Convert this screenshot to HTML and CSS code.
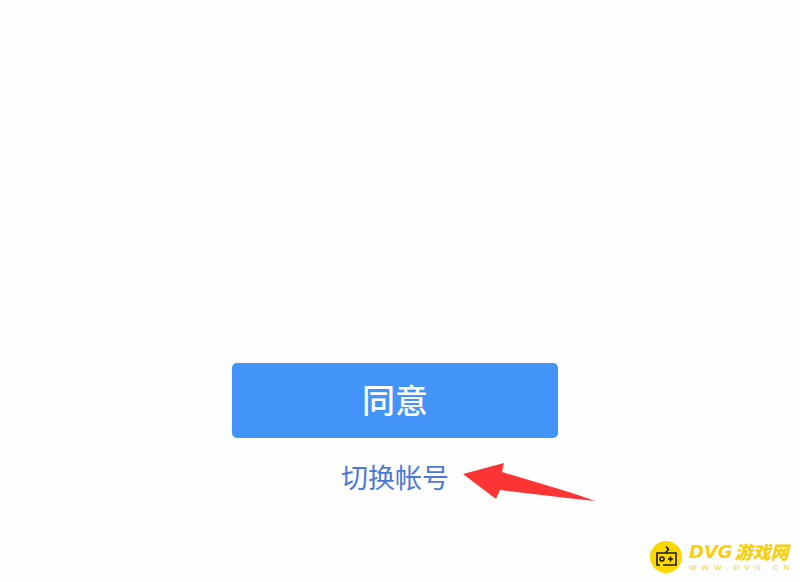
FILE: index.html
```html
<!DOCTYPE html>
<html lang="zh-CN">
  <head>
    <meta charset="UTF-8" />
    <meta name="viewport" content="width=device-width, initial-scale=1.0" />
    <title>切换帐号</title>
    <link rel="stylesheet" href="styles.css">
  </head>
  <body>
    <main class="login">
      <button class="agree-btn" type="button">同意</button>
      <div class="switch-wrapper">
        <a class="switch-link" href="#">切换帐号</a>
        <svg class="arrow" viewBox="0 0 134 38" aria-hidden="true">
          <path d="M0 11L41 0L39 9L96 26Q122 34 132 38L104 35L37 27L33 36Z" fill="#fc3434" />
        </svg>
      </div>
    </main>

    <footer class="brand">
      <svg class="brand-logo" viewBox="0 0 32 32" aria-hidden="true">
        <circle cx="16" cy="16" r="16" fill="#fbd800" />
        <g fill="none" stroke="#1c1a08" stroke-width="1.6">
          <path d="M10 24H7V12H26V24H13" />
          <path d="M16.500 12V10.500L18.500 8.500L16 5.500" />
          <circle cx="12" cy="18" r="2" />
          <path d="M20.500 15.500V20.500M18 18H23" />
        </g>
      </svg>
      <div class="brand-text">
        <div class="brand-name"><span class="brand-latin">DVG</span>游戏网</div>
        <div class="brand-url">WWW.DVG.CN</div>
      </div>
    </footer>
  </body>
</html>
```

FILE: styles.css
```css
body {
  margin: 0;
  min-height: 100vh;
  display: flex;
  flex-direction: column;
  background: #fefefe;
  font-family: "Noto Sans CJK SC", sans-serif;
}

.login {
  flex: 1;
  display: flex;
  flex-direction: column;
  justify-content: flex-end;
  align-items: center;
  gap: 20px;
  padding: 0 10px 44px 0;
}

.agree-btn {
  width: 326px;
  max-width: 90%;
  height: 75px;
  padding: 0 0 4px;
  border: none;
  border-radius: 5px;
  background: #4294f8;
  color: #fff;
  font-family: inherit;
  font-size: 33px;
  font-weight: 500;
  line-height: 70px;
  cursor: pointer;
}

.switch-wrapper {
  position: relative;
}

.switch-link {
  display: block;
  color: #4c78d8;
  font-size: 27px;
  line-height: 38px;
  text-decoration: none;
}

/* points at the switch link */
.arrow {
  position: absolute;
  left: 100%;
  top: 5px;
  width: 134px;
  height: 38px;
  margin-left: 14px;
}

.brand {
  display: flex;
  justify-content: flex-end;
  align-items: center;
  gap: 7px;
  padding: 0 8px 9px 0;
}

.brand-logo {
  width: 32px;
  height: 32px;
}

.brand-text {
  width: 103px;
  color: #f8cf10;
  white-space: nowrap;
}

.brand-name {
  display: flex;
  align-items: center;
  gap: 2px;
  font-size: 18px;
  font-weight: 900;
  font-style: italic;
  line-height: 23px;
}

.brand-latin {
  font-family: "DejaVu Sans", sans-serif;
  font-size: 18px;
}

.brand-url {
  font-family: "Liberation Sans", sans-serif;
  font-size: 8px;
  line-height: 10px;
  letter-spacing: 5px;
}
```
